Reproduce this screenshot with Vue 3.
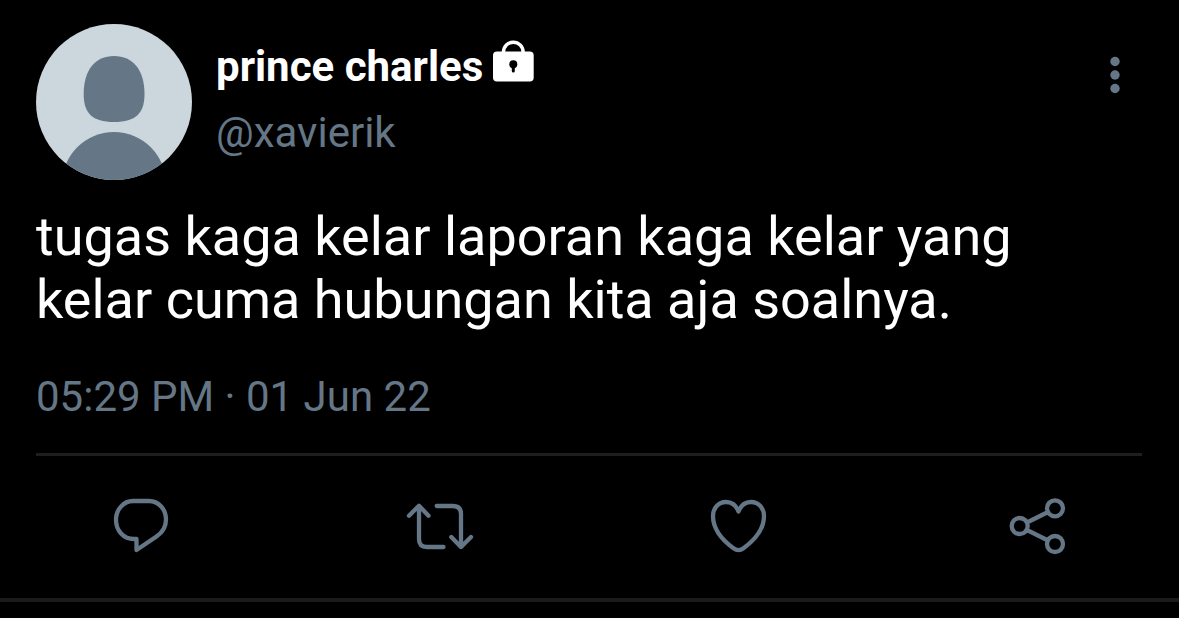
<script setup>
const tweet = {
  name: 'prince charles',
  handle: '@xavierik',
  text: 'tugas kaga kelar laporan kaga kelar yang kelar cuma hubungan kita aja soalnya.',
  date: '05:29 PM · 01 Jun 22',
}

const actions = [
  {
    label: 'Reply',
    d: 'M32 16H48C57.800 16 65 24.500 65 34.500C65 41.500 61.500 47.500 55.500 51.500L35.500 65V54H33C22.500 54 15 45.500 15 35C15 24.500 22.500 16 32 16Z',
  },
  {
    label: 'Retweet',
    d: 'M9 30.700L19 20.700L28.500 30.700M19 21V54Q19 62 27 62H43.500M36.700 21H53Q61 21 61 29V62M51.300 52L61 62L71 52',
  },
  {
    label: 'Like',
    d: 'M39.500 26.500C37 20 32.500 17 27 17C19.500 17 14 23 14 31C14 43 22.500 54.500 34.500 63.300Q39.500 67 44.500 63.300C56.500 54.500 65 43 65 31C65 23 59.500 17 52 17C46.500 17 42 20 39.500 26.500Z',
  },
  {
    label: 'Share',
    d: 'M29 37.500L50 27M29 45L50 55.500M29.700 41a8 8 0 1 1-16 0a8 8 0 1 1 16 0M65 23.300a8 8 0 1 1-16 0a8 8 0 1 1 16 0M65 59a8 8 0 1 1-16 0a8 8 0 1 1 16 0',
  },
]
</script>

<template>
  <main class="page">
    <article class="tweet">
      <header class="author">
        <svg class="avatar" viewBox="0 0 156 156" role="img" aria-label="Avatar">
          <defs>
            <clipPath id="avatar-clip"><circle cx="78" cy="78" r="78" /></clipPath>
          </defs>
          <g clip-path="url(#avatar-clip)">
            <rect width="156" height="156" fill="#ccd6dd" />
            <path d="M78 32C97 32 108.500 46 108.500 70C108.500 89 100 98 78 98C56 98 47.700 89 47.700 70C47.700 46 59 32 78 32Z" fill="#657786" />
            <circle cx="78" cy="160" r="52" fill="#657786" />
          </g>
        </svg>
        <div class="names">
          <div class="name-row">
            <h1 class="name">{{ tweet.name }}</h1>
            <svg class="lock" viewBox="0 0 42 42" role="img" aria-label="Protected account">
              <path d="M10.500 14V12a9.800 9.800 0 0 1 19.600 0V14" fill="none" stroke="#fff" stroke-width="3.400" />
              <rect y="11.500" width="40.700" height="30" rx="4" fill="#fff" />
              <circle cx="20.300" cy="24.200" r="4" fill="#000" />
              <path d="M20.300 25V31" stroke="#000" stroke-width="3" stroke-linecap="round" />
            </svg>
          </div>
          <a class="handle" href="#">{{ tweet.handle }}</a>
        </div>
        <button class="more" type="button" aria-label="More options">
          <svg viewBox="0 0 54 54" fill="#657786">
            <circle cx="27" cy="13.500" r="4.700" />
            <circle cx="27" cy="27" r="4.700" />
            <circle cx="27" cy="40.500" r="4.700" />
          </svg>
        </button>
      </header>
      <p class="text">{{ tweet.text }}</p>
      <time class="date">{{ tweet.date }}</time>
      <div class="actions">
        <button v-for="a in actions" :key="a.label" class="action" type="button" :aria-label="a.label">
          <svg viewBox="0 0 80 80"><path :d="a.d" /></svg>
        </button>
      </div>
    </article>
  </main>
</template>

<style>
html,
body {
  background: #000;
}
</style>

<style scoped>
.page {
  font-family: Roboto, 'Liberation Sans', sans-serif;
  color: #fff;
}
.tweet {
  padding: 24px 37px 33px 36px;
  border-bottom: 4px solid #1b1b1b;
}
.author {
  display: flex;
  align-items: flex-start;
}
.avatar {
  width: 156px;
  height: 156px;
  flex: none;
}
.names {
  flex: 1;
  min-width: 0;
  padding: 10px 0 0 24px;
}
.name-row {
  display: flex;
  align-items: flex-start;
  gap: 10px;
}
.name {
  margin: 0;
  font-size: 42px;
  line-height: 66px;
  font-weight: 700;
}
.lock {
  width: 42px;
  height: 42px;
  margin-top: 6px;
}
.handle {
  display: block;
  font-size: 42px;
  line-height: 66px;
  color: #657786;
  text-decoration: none;
}
.more,
.action {
  padding: 0;
  border: 0;
  background: none;
  cursor: pointer;
}
.more {
  width: 54px;
  height: 54px;
  margin-top: 24px;
}
.more svg,
.action svg {
  display: block;
}
.text {
  margin: 25px 0 0;
  padding-right: 24px;
  font-size: 54px;
  line-height: 63px;
}
.date {
  display: block;
  margin-top: 33px;
  font-size: 42px;
  line-height: 66px;
  color: #657786;
}
.actions {
  display: flex;
  justify-content: space-between;
  margin-top: 23px;
  padding: 29px 64px 0 65px;
  border-top: 3px solid #1e1e1e;
}
.action {
  width: 80px;
  height: 80px;
}
.action path {
  fill: none;
  stroke: #657786;
  stroke-width: 4.300;
  stroke-linecap: round;
  stroke-linejoin: round;
}
</style>
